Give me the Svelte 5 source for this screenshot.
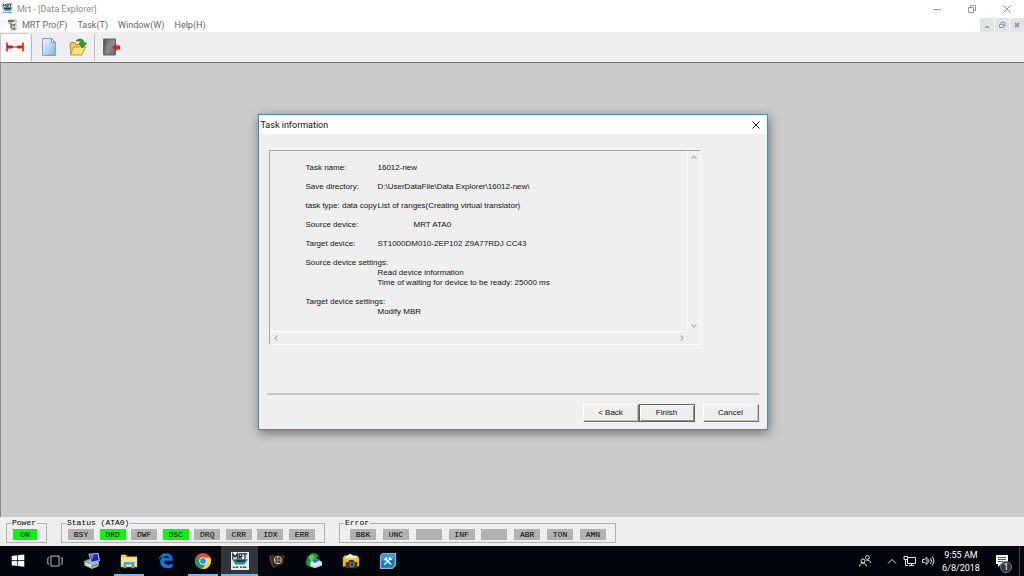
<script lang="ts">
	type Lamp = { label: string; on?: boolean };
	type App = { name: string; icon: string; running?: boolean; active?: boolean };

	const menus = ['MRT Pro(F)', 'Task(T)', 'Window(W)', 'Help(H)'];

	const groups: { title: string; kind: string; lamps: Lamp[] }[] = [
		{ title: 'Power', kind: 'power', lamps: [{ label: 'ON', on: true }] },
		{
			title: 'Status (ATA0)',
			kind: 'status',
			lamps: [
				{ label: 'BSY' },
				{ label: 'DRD', on: true },
				{ label: 'DWF' },
				{ label: 'DSC', on: true },
				{ label: 'DRQ' },
				{ label: 'CRR' },
				{ label: 'IDX' },
				{ label: 'ERR' }
			]
		},
		{
			title: 'Error',
			kind: 'error',
			lamps: ['BBK', 'UNC', '', 'INF', '', 'ABR', 'TON', 'AMN'].map((label) => ({ label }))
		}
	];

	const details = [
		{ label: 'Task name:', value: '16012-new' },
		{ label: 'Save directory:', value: 'D:\\UserDataFile\\Data Explorer\\16012-new\\' },
		{ label: 'task type: data copy', value: 'List of ranges(Creating virtual translator)' },
		{ label: 'Source device:', value: 'MRT ATA0', indent: true },
		{ label: 'Target device:', value: 'ST1000DM010-2EP102 Z9A77RDJ CC43' }
	];

	const settings = [
		{
			label: 'Source device settings:',
			lines: ['Read device information', 'Time of waiting for device to be ready: 25000 ms']
		},
		{ label: 'Target device settings:', lines: ['Modify MBR'] }
	];

	const apps: App[] = [
		{ name: 'Start', icon: 'start' },
		{ name: 'Task View', icon: 'taskview' },
		{ name: 'Remote', icon: 'pc' },
		{ name: 'File Explorer', icon: 'explorer', running: true },
		{ name: 'Edge', icon: 'edge' },
		{ name: 'Chrome', icon: 'chrome', running: true },
		{ name: 'Mrt', icon: 'mrt', running: true, active: true },
		{ name: 'Wallet', icon: 'wallet' },
		{ name: 'Disk', icon: 'disk' },
		{ name: 'Camera', icon: 'camera' },
		{ name: 'Tools', icon: 'tools' }
	];

	let dialogOpen = $state(true);
	const close = () => (dialogOpen = false);
</script>

{#snippet mrtLogo()}
	<rect width="20" height="20" fill="#e4eeee" />
	<path d="M1 8h18l-4 6H5z" fill="#2b8c93" />
	<path d="M3 8.500h14l-3 2.500H7z" fill="#1c3a44" />
	<path
		d="M2 8V2l2.500 3.500L7 2v6M9 8V2h3v3H9.500L12 8M13 2h5M15.500 2v6"
		fill="none"
		stroke="#172428"
		stroke-width="1.300"
	/>
	<path d="M2 17h2M5 17h3M10 17h2M13 17h4" stroke="#3c5560" stroke-width="1.600" />
{/snippet}

{#snippet appIcon(icon: string)}
	<svg class="app-icon" viewBox="0 0 20 20" aria-hidden="true">
		{#if icon === 'start'}
			<path
				d="M3 4.500l6-.8v5.500H3zM9.800 3.600L17 2.700v6.500H9.800zM3 10h6v5.500l-6-.8zM9.800 10H17v6.500l-7.200-.9z"
				fill="#fff"
			/>
		{:else if icon === 'taskview'}
			<g fill="none" stroke="#c9cbcd">
				<rect x="5.500" y="4.500" width="9" height="11" />
				<path d="M3.500 6.500h-1.500v7h1.500M16.500 6.500h1.500v7h-1.500" />
			</g>
		{:else if icon === 'pc'}
			<path d="M1 10l8-2 9 3-1 5-7 3-8-4z" fill="#a9b0b6" />
			<path d="M2 11l8 3v4l-8-3zM4 8l6 2 4-1" fill="#dce0e3" stroke="#747c84" stroke-width=".6" />
			<path d="M6 2l11-1 2 9-10 2z" fill="#c5cddd" />
			<path d="M7.500 3l8.500-.8 1.500 7-8 1.500z" fill="#1522c8" />
			<path d="M8 3l4.500-.5L10 9z" fill="#6f86ef" />
			<path d="M10 16l6-2" stroke="#585f66" />
		{:else if icon === 'explorer'}
			<path d="M1 3h6l1 2h11v12H1z" fill="#e9b94f" />
			<path d="M1 6h18v10H1z" fill="#ffe08b" />
			<path d="M4 18v-7h12v7h-3v-4H7v4z" fill="#39aee0" />
			<path d="M2 4h4" stroke="#fff1bd" />
		{:else if icon === 'edge'}
			<path
				d="M2 9c.5-5 4-7.500 8.200-7.500 5 0 7.300 3.600 7.300 8.300H7.700c.2 3 2.600 4.300 5.100 4.300 1.700 0 3-.5 4.200-1.200v3.700c-1.300.8-3 1.400-5.300 1.400-5 0-8.200-2.800-8.200-7.100 0-3 1.700-5.100 4-6.200C4.700 5.200 3 6.800 2 9zm5.900-2.200h5.300c0-1.600-.8-2.700-2.500-2.700-1.500 0-2.500 1.100-2.800 2.700z"
				fill="#0878d7"
			/>
		{:else if icon === 'chrome'}
			<circle cx="10" cy="10" r="9" fill="#e44a3b" />
			<path d="M2.200 5.500A9 9 0 0 0 9.200 19L13.700 12 10 10z" fill="#18a15f" />
			<path d="M10 6h8A9 9 0 0 1 9.200 19L13.600 12z" fill="#ffcf42" />
			<circle cx="10" cy="10" r="4.200" fill="#fff" />
			<circle cx="10" cy="10" r="3.300" fill="#4684ee" />
		{:else if icon === 'mrt'}
			{@render mrtLogo()}
		{:else if icon === 'wallet'}
			<path d="M1 4l6-1 1 1 11-1-2 10-11 5-2-3z" fill="#442720" />
			<path d="M2 5l3 10" stroke="#78503e" />
			<circle cx="11" cy="9" r="4" fill="#302020" stroke="#e6dcd4" />
			<path d="M7.500 9h7M11 5.500v7" stroke="#c9beb6" />
			<circle cx="11" cy="9" r="1.300" fill="#77685f" />
		{:else if icon === 'disk'}
			<path d="M1 11l2-6 5-4 5 1 2 3-3 2 2 2-6 8-6-2z" fill="#1b9e34" />
			<path d="M4 5l4-2 3 2-4 6" fill="#63ca61" />
			<path d="M6 11l7-4 6 4v4l-8 3-5-2z" fill="#cad6df" />
			<path d="M8 10l5-3 4 2-6 3z" fill="#2a6fb2" />
			<path d="M7 13l4 1.500 7-3" fill="none" stroke="#fff" />
		{:else if icon === 'camera'}
			<path d="M1 6l2-2h4l2-2 3 2h5l2 3v9H1z" fill="#f6bf18" />
			<path d="M4 5l5-3 3 2 4 1v2H4z" fill="#eef1ee" />
			<path d="M4 11h3l1-2h5l1 2h3v7H4z" fill="#333b3f" />
			<circle cx="11" cy="14" r="3" fill="#777e80" />
			<circle cx="11" cy="14" r="1.500" fill="#1b2125" />
		{:else}
			<path d="M4 1h15v14l-4 4H1V4z" fill="#8fb4cc" />
			<path d="M4.500 2.500h13v12l-3 3h-12v-12z" fill="#147dbb" />
			<path d="M2.500 4.500l2-2h13v5c-5 3-10 3-15 2z" fill="#3c9bd4" />
			<path d="M6 14l7-7M7.500 8l6 6" stroke="#fff" stroke-width="1.500" />
			<path d="M6 9l3-3M12 5.500v2.500h2.500" fill="none" stroke="#fff" stroke-width="1.600" />
		{/if}
	</svg>
{/snippet}

<div class="screen">
	<header class="titlebar">
		<svg class="logo" viewBox="0 0 20 20" aria-hidden="true">{@render mrtLogo()}</svg>
		<h1>Mrt - [Data Explorer]</h1>
		<div class="window-buttons">
			<button aria-label="Minimize">
				<svg viewBox="0 0 10 10"><path d="M1 5.500h8" /></svg>
			</button>
			<button aria-label="Restore">
				<svg viewBox="0 0 10 10"><path d="M1.500 3.500h5v5h-5zM3.500 3V1.500h5v5H7" /></svg>
			</button>
			<button aria-label="Close">
				<svg viewBox="0 0 10 10"><path d="M1.500 1.500l7 7M8.500 1.500l-7 7" /></svg>
			</button>
		</div>
	</header>

	<nav class="menubar">
		<svg class="doc-icon" viewBox="0 0 10 12" aria-hidden="true">
			<path d="M2 1h7v10H4V5H2z" fill="#e2e2e2" stroke="#999" stroke-width=".8" />
			<path d="M1 2h6" stroke="#a05a4c" stroke-width="2" />
			<path d="M4 3v6h2M4 6h2" fill="none" stroke="#555" stroke-width=".8" />
			<path d="M6 6h2" stroke="#4b9060" stroke-width="2" />
			<path d="M6 9.500h2" stroke="#c04733" stroke-width="2" />
		</svg>
		{#each menus as menu (menu)}
			<button class="menu">{menu}</button>
		{/each}
		<div class="mdi-buttons">
			<button aria-label="Minimize child">
				<svg viewBox="0 0 8 8"><path d="M2 6h4" stroke-width="1.500" /></svg>
			</button>
			<button aria-label="Restore child">
				<svg viewBox="0 0 8 8"><path d="M1.500 3.500h4v3h-4zM3 3V1.500h4v3H6" /></svg>
			</button>
			<button aria-label="Close child">
				<svg viewBox="0 0 8 8"><path d="M2 2l4 4M6 2L2 6" stroke-width="1.800" /></svg>
			</button>
		</div>
	</nav>

	<div class="toolbar" role="toolbar" aria-label="Task tools">
		<button class="tool pressed" aria-label="Connect">
			<svg viewBox="0 0 20 20">
				<path d="M2 5.500v9M18 5.500v9" stroke="#e8151b" stroke-width="1.600" />
				<path d="M2 8.500h5l1.500 1h3l1.500-1h5v3h-5l-1.500-1h-3l-1.500 1H2z" fill="#e8151b" />
			</svg>
		</button>
		<span class="separator"></span>
		<button class="tool" aria-label="New task">
			<svg viewBox="0 0 20 20">
				<defs>
					<linearGradient id="page" x2="1" y2="1">
						<stop stop-color="#f2f8ff" />
						<stop offset="1" stop-color="#7fb2ec" />
					</linearGradient>
				</defs>
				<path d="M3.500 1.500h9l4 4v13h-13z" fill="url(#page)" stroke="#7ea3d2" />
				<path d="M12.500 1.500v4h4z" fill="#fff" stroke="#5486c4" stroke-width=".8" />
			</svg>
		</button>
		<button class="tool" aria-label="Open task">
			<svg viewBox="0 0 20 20">
				<path d="M2 6.500l1-1h4l1 2h6v10H3z" fill="#f0c750" stroke="#bf8b1f" />
				<path d="M5.500 10h12L14 18H2.500z" fill="#ffe37c" stroke="#c9972a" />
				<path
					d="M8 4c3-3.500 8-2 8 2h2.500l-4 5L11 6h2c0-2-2-2.500-5-2z"
					fill="#29a52c"
					stroke="#11701c"
					stroke-width=".7"
				/>
			</svg>
		</button>
		<span class="separator"></span>
		<button class="tool" aria-label="Exit">
			<svg viewBox="0 0 20 20">
				<defs>
					<linearGradient id="door" x2="1" y2="1">
						<stop stop-color="#5d5d5d" />
						<stop offset=".5" stop-color="#909090" />
						<stop offset="1" stop-color="#626262" />
					</linearGradient>
				</defs>
				<path d="M1.500 2h12v16h-12z" fill="url(#door)" stroke="#686868" />
				<path d="M3 2v16" stroke="#555" />
				<path d="M10 10.500l4.500-4v2H18v4h-3.500v2z" fill="#de2026" />
			</svg>
		</button>
	</div>

	<main class="workspace">
		{#if dialogOpen}
			<div class="dialog" role="dialog" aria-labelledby="dialog-title">
				<div class="dialog-title">
					<h2 id="dialog-title">Task information</h2>
					<button class="dialog-close" aria-label="Close dialog" onclick={close}>
						<svg viewBox="0 0 10 10"><path d="M1.500 1.500l7 7M8.500 1.500l-7 7" /></svg>
					</button>
				</div>
				<div class="dialog-body">
					<div class="info">
						<dl>
							{#each details as row (row.label)}
								<div class="row">
									<dt>{row.label}</dt>
									<dd class:indent={row.indent}>{row.value}</dd>
								</div>
							{/each}
							{#each settings as group (group.label)}
								<div class="row stacked">
									<dt>{group.label}</dt>
									{#each group.lines as line (line)}
										<dd>{line}</dd>
									{/each}
								</div>
							{/each}
						</dl>
						<div class="scroll vertical">
							<button aria-label="Scroll up">
								<svg viewBox="0 0 8 8"><path d="M1.500 5.500L4 3l2.500 2.500" /></svg>
							</button>
							<button aria-label="Scroll down">
								<svg viewBox="0 0 8 8"><path d="M1.500 2.500L4 5l2.500-2.500" /></svg>
							</button>
						</div>
						<div class="scroll">
							<button aria-label="Scroll left">
								<svg viewBox="0 0 8 8"><path d="M5.500 1.500L3 4l2.500 2.500" /></svg>
							</button>
							<button aria-label="Scroll right">
								<svg viewBox="0 0 8 8"><path d="M2.500 1.500L5 4 2.500 6.500" /></svg>
							</button>
						</div>
					</div>
					<div class="actions">
						<button class="push">&lt; Back</button>
						<button class="push default" onclick={close}>Finish</button>
						<button class="push cancel" onclick={close}>Cancel</button>
					</div>
				</div>
			</div>
		{/if}
	</main>

	<section class="statusbar" aria-label="Device status">
		{#each groups as group (group.kind)}
			<fieldset class={group.kind}>
				<legend>{group.title}</legend>
				<div class="lamps">
					{#each group.lamps as lamp, i (i)}
						<span class="lamp" class:on={lamp.on}>{lamp.label}</span>
					{/each}
				</div>
			</fieldset>
		{/each}
	</section>

	<footer class="taskbar">
		{#each apps as app (app.name)}
			<button class="app" class:running={app.running} class:active={app.active} aria-label={app.name}>
				{@render appIcon(app.icon)}
			</button>
		{/each}
		<div class="tray">
			<button class="people" aria-label="People">
				<svg viewBox="0 0 14 14">
					<circle cx="5" cy="7" r="2" />
					<path d="M1.500 12.500c0-4.500 7-4.500 7 0" />
					<circle cx="9.500" cy="3.500" r="1.900" />
					<path d="M8.500 6.500c2.500-1 4 .5 4 2.500" />
				</svg>
			</button>
			<button aria-label="Show hidden icons">
				<svg viewBox="0 0 14 14"><path d="M3 9.500l4-4 4 4" /></svg>
			</button>
			<button aria-label="Network">
				<svg viewBox="0 0 14 14">
					<path d="M4.500 3.500h8v6h-8zM8.500 9.500v2M6 11.500h5M1 2.500h3.500v3H1zM2.500 5.500v6H5" />
				</svg>
			</button>
			<button aria-label="Volume">
				<svg viewBox="0 0 14 14">
					<path
						d="M1.500 5.500h2l2.500-2v7l-2.500-2h-2zM7.500 5.500q1 1.500 0 3M9.500 4q2 3 0 6M11.500 2.500q3 4.500 0 9"
					/>
				</svg>
			</button>
			<time datetime="2018-06-08T09:55">
				<span>9:55 AM</span>
				<span>6/8/2018</span>
			</time>
			<button class="notices" aria-label="1 notification">
				<svg viewBox="0 0 14 14">
					<path d="M1 1h12v9H6l-3 3v-3H1z" fill="#fff" stroke="none" />
					<path d="M3 3.500h8M3 5.500h8M3 7.500h5" stroke="#0a0d12" stroke-width=".7" />
				</svg>
				<span class="count">1</span>
			</button>
			<span class="show-desktop"></span>
		</div>
	</footer>
</div>

<style>
	:global(body) {
		background: #cbcbcb;
	}

	.screen {
		display: flex;
		flex-direction: column;
		min-height: 100vh;
		font-family: Roboto, 'Open Sans', sans-serif;
		font-size: 9px;
		line-height: 10px;
		color: #111;
	}

	button {
		display: flex;
		align-items: center;
		justify-content: center;
		margin: 0;
		padding: 0;
		border: 0;
		background: none;
		color: inherit;
		font: inherit;
	}

	svg {
		display: block;
		flex-shrink: 0;
	}

	h1,
	h2 {
		margin: 0;
		font-size: inherit;
		font-weight: 400;
	}

	/* main window chrome */
	.titlebar {
		display: flex;
		align-items: center;
		height: 17px;
		padding-left: 2px;
		background: #fff;
		color: #8c8c8c;
	}

	.logo {
		width: 11px;
		height: 11px;
		margin-right: 4px;
	}

	.window-buttons {
		display: flex;
		margin-left: auto;
	}

	.window-buttons button {
		width: 35px;
		height: 15px;
	}

	.window-buttons svg,
	.dialog-close svg {
		width: 10px;
		height: 10px;
		fill: none;
		stroke: #999;
	}

	.menubar {
		display: flex;
		align-items: center;
		gap: 10px;
		height: 14px;
		padding: 1px 0 0 7px;
		background: #fff;
		color: #666;
	}

	.doc-icon {
		width: 10px;
		height: 12px;
		margin-right: -5px;
	}

	.mdi-buttons {
		display: flex;
		gap: 1px;
		margin-left: auto;
	}

	.mdi-buttons button {
		width: 14px;
		height: 14px;
		background: #e4e4e4;
	}

	.mdi-buttons svg {
		width: 8px;
		height: 8px;
		fill: none;
		stroke: #869bac;
	}

	.toolbar {
		display: flex;
		align-items: center;
		height: 30px;
		background: #efefef;
	}

	.tool {
		width: 29px;
		height: 29px;
	}

	.tool svg {
		width: 20px;
		height: 20px;
	}

	.tool.pressed {
		box-sizing: border-box;
		background: #fafafa;
		border: 1px solid #c8c8c8;
		border-right-color: #fff;
		border-bottom-color: #fff;
	}

	.separator {
		width: 1px;
		height: 27px;
		margin: 0 2px;
		background: #bdbdbd;
	}

	.workspace {
		display: grid;
		flex: 1;
		place-items: center;
		padding-bottom: 36px;
		background: #cbcbcb;
		border-top: 1px solid #747474;
		border-left: 1px solid #8a8a8a;
	}

	/* wizard dialog */
	.dialog {
		width: 508px;
		max-width: 100%;
		background: #efefef;
		border: 1px solid #3d8bcb;
		box-shadow: 1px 3px 10px rgb(0 0 0 / 45%);
	}

	.dialog-title {
		display: flex;
		align-items: center;
		justify-content: space-between;
		height: 19px;
		padding: 0 6px 0 2px;
		background: #fff;
	}

	.dialog-close svg {
		stroke: #222;
	}

	.dialog-body {
		padding: 16px 8px 7px;
		font-family: 'Liberation Sans', Arial, sans-serif;
		font-size: 8px;
	}

	.info {
		display: grid;
		grid-template-columns: 1fr 12px;
		grid-template-rows: 1fr 12px;
		width: 430px;
		max-width: 100%;
		margin: 0 0 48px 2px;
		border: 1px solid #a9a9a9;
		border-right-color: #fafafa;
		border-bottom-color: #fafafa;
	}

	dl {
		display: flex;
		flex-direction: column;
		gap: 9px;
		margin: 0;
		padding: 12px 0 14px 36px;
		white-space: nowrap;
		border-right: 1px solid #fafafa;
		border-bottom: 1px solid #fafafa;
	}

	.row {
		display: grid;
		grid-template-columns: 72px 1fr;
	}

	dd {
		grid-column: 2;
		margin: 0;
	}

	dd.indent {
		padding-left: 36px;
	}

	.stacked dt {
		grid-column: 1 / -1;
	}

	.scroll {
		display: flex;
		justify-content: space-between;
		padding: 0 2px;
	}

	.scroll.vertical {
		flex-direction: column;
		align-items: center;
		padding: 2px 0;
	}

	.scroll svg {
		width: 8px;
		height: 8px;
		fill: none;
		stroke: #b3b3b3;
		stroke-width: 1.3;
	}

	.actions {
		display: flex;
		justify-content: flex-end;
		padding-top: 9px;
		border-top: 2px solid #c6c6c6;
	}

	.push {
		box-sizing: border-box;
		width: 56px;
		height: 18px;
		border: 1px solid #fff;
		border-right-color: #777;
		border-bottom-color: #777;
		box-shadow: inset -1px -1px #c0c0c0;
	}

	.push.default {
		border-color: #666;
		box-shadow:
			inset 1px 1px #fff,
			inset -1px -1px #8a8a8a;
	}

	.push.cancel {
		margin-left: 8px;
	}

	/* register lamps */
	.statusbar {
		display: flex;
		align-items: flex-start;
		gap: 14px;
		box-sizing: border-box;
		height: 29px;
		padding: 1px 6px 0;
		background: #efefef;
		font-family: 'Liberation Mono', monospace;
		font-size: 8px;
		color: #000;
	}

	fieldset {
		box-sizing: border-box;
		min-width: 0;
		margin: 0;
		padding: 1px 9px 2px 6px;
		border: 1px solid #b0b0b0;
	}

	fieldset.power {
		width: 41px;
	}

	fieldset.status {
		width: 264px;
	}

	fieldset.error {
		width: 277px;
		padding-left: 10px;
	}

	legend {
		margin-left: -2px;
		padding: 0 1px;
	}

	.error legend {
		margin-left: -6px;
	}

	.lamps {
		display: flex;
		justify-content: space-between;
	}

	.lamp {
		width: 26px;
		height: 11px;
		background: #b2b2b2;
		line-height: 11px;
		text-align: center;
	}

	.lamp.on {
		background: #00fb0b;
	}

	/* system taskbar */
	.taskbar {
		display: flex;
		height: 30px;
		background: #02050b;
		color: #fff;
	}

	.app {
		box-sizing: border-box;
		width: 37px;
		padding-top: 2px;
		border-bottom: 2px solid transparent;
	}

	.app:first-child {
		width: 36px;
	}

	.app.running {
		background: linear-gradient(#76b9ed, #76b9ed) bottom / 30px 2px no-repeat border-box;
	}

	.app.active {
		background: #30363b;
		border-bottom-color: #76b9ed;
	}

	.app-icon {
		width: 18px;
		height: 18px;
	}

	.tray {
		display: flex;
		align-items: center;
		margin-left: auto;
	}

	.tray svg {
		width: 14px;
		height: 14px;
		fill: none;
		stroke: #e2e2e2;
	}

	.tray button {
		width: 18px;
		height: 30px;
	}

	.tray .people {
		margin-right: 9px;
	}

	time {
		display: flex;
		flex-direction: column;
		gap: 3px;
		width: 48px;
		text-align: center;
	}

	.tray .notices {
		position: relative;
		width: 34px;
	}

	.count {
		position: absolute;
		right: 7px;
		bottom: 3px;
		width: 10px;
		height: 10px;
		background: #33373b;
		border: 1px solid #777;
		border-radius: 50%;
	}

	.show-desktop {
		width: 4px;
		height: 30px;
		border-left: 1px solid #43474b;
	}
</style>
